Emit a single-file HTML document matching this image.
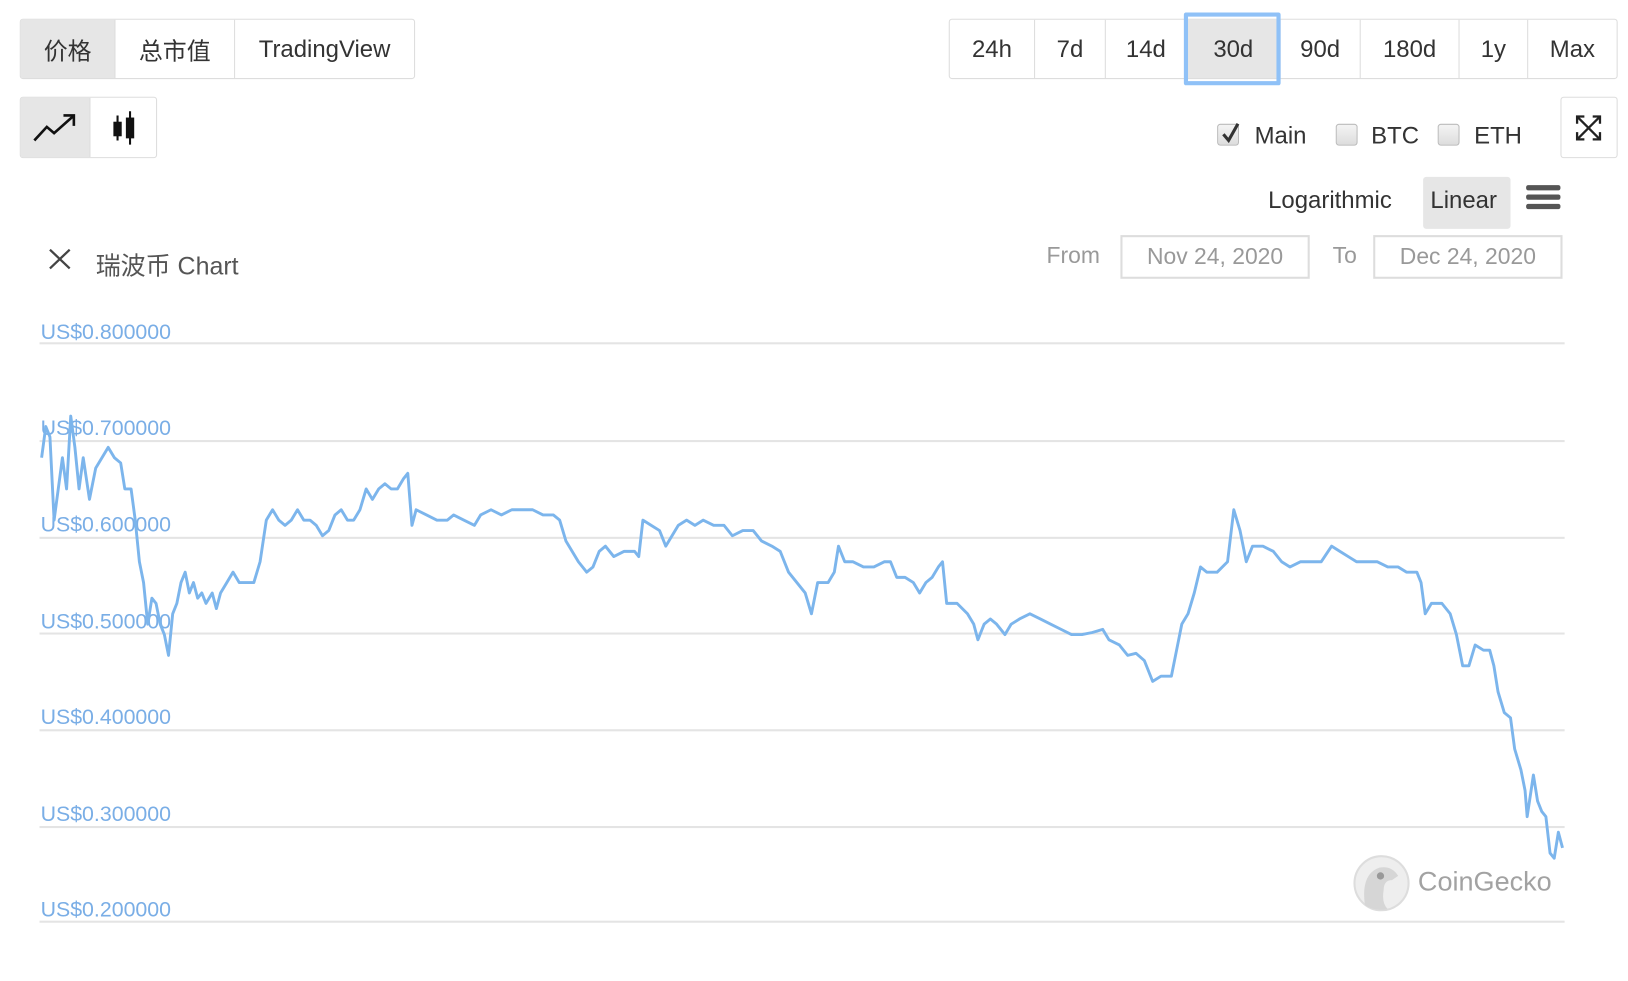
<!DOCTYPE html>
<html><head><meta charset="utf-8"><style>
html,body{margin:0;padding:0;background:#fff;width:1628px;height:981px;overflow:hidden}
#w{position:absolute;left:0;top:0;width:1565px;height:943px;transform:scale(1.0403);transform-origin:0 0;font-family:"Liberation Sans","Noto Sans CJK SC",sans-serif;color:#333}
.a{position:absolute;box-sizing:border-box}
.grp{border:1px solid #ddd;border-radius:3px;display:flex;overflow:hidden}
.grp div{border-right:1px solid #ddd;display:flex;align-items:center;justify-content:center;font-size:23px;color:#333;height:100%;box-sizing:border-box}
.grp div:last-child{border-right:none}
.on{background:#e6e6e6}
.gl{position:absolute;left:38px;width:1466px;height:2px;background:#e4e4e4}
.lb{position:absolute;left:39px;font-size:20.5px;color:#7aaee6}
.cb{position:absolute;width:21px;height:21px;border:1px solid #bbb;border-radius:3px;background:linear-gradient(#f4f4f4,#ddd);box-sizing:border-box}
.t{position:absolute;font-size:23px;color:#333;white-space:nowrap}
.dt{position:absolute;border:2px solid #ddd;font-size:22px;color:#999;display:flex;align-items:center;justify-content:center;box-sizing:border-box}
</style></head><body><div id="w">
<div class="a grp" style="left:19px;top:18px;width:380px;height:58px">
<div class="on" style="width:91px">价格</div><div style="width:115px">总市值</div><div style="flex:1">TradingView</div></div>
<div class="a grp" style="left:912px;top:18px;width:643px;height:58px">
<div style="width:82px">24h</div><div style="width:68px">7d</div><div style="width:78px">14d</div><div class="on" style="width:90px">30d</div><div style="width:77px">90d</div><div style="width:95px">180d</div><div style="width:66px">1y</div><div style="flex:1">Max</div></div>
<div class="a" style="left:1138px;top:12px;width:93px;height:70px;border:4px solid #8fc1f7;border-radius:2px"></div>
<div class="a grp" style="left:19px;top:93px;width:132px;height:59px">
<div class="on" style="width:67px"><svg width="44" height="30" viewBox="0 0 44 30"><path d="M2 27 L14 14 L21 20 L39 4" fill="none" stroke="#111" stroke-width="2.5"/><path d="M30 3 L40 3 L40 13" fill="none" stroke="#111" stroke-width="2.5"/></svg></div>
<div style="flex:1"><svg width="30" height="36" viewBox="0 0 30 36"><line x1="9" y1="6" x2="9" y2="30" stroke="#111" stroke-width="2"/><rect x="5" y="12" width="8" height="14" fill="#111"/><line x1="21" y1="2" x2="21" y2="34" stroke="#111" stroke-width="2"/><rect x="17" y="8" width="8" height="20" fill="#111"/></svg></div></div>
<div class="cb" style="left:1170px;top:119px"></div>
<svg class="a" style="left:1173px;top:117px" width="20" height="22"><path d="M3 12 L8 18 L17 2" fill="none" stroke="#333" stroke-width="3"/></svg>
<div class="t" style="left:1206px;top:117px">Main</div>
<div class="cb" style="left:1284px;top:119px"></div>
<div class="t" style="left:1318px;top:117px">BTC</div>
<div class="cb" style="left:1382px;top:119px"></div>
<div class="t" style="left:1417px;top:117px">ETH</div>
<div class="a" style="left:1500px;top:93px;width:55px;height:59px;border:1px solid #ddd;border-radius:3px"></div>
<svg class="a" style="left:1514px;top:110px" width="26" height="26" viewBox="0 0 26 26"><g fill="none" stroke="#222" stroke-width="2.2"><path d="M2 2 L24 24 M24 2 L2 24"/><path d="M2 9 V2 H9 M17 2 H24 V9 M2 17 V24 H9 M17 24 H24 V17"/></g></svg>
<div class="t" style="left:1219px;top:179px">Logarithmic</div>
<div class="a on" style="left:1368px;top:170px;width:84px;height:50px;border-radius:3px"></div>
<div class="t" style="left:1375px;top:179px">Linear</div>
<div class="a" style="left:1467px;top:178px;width:33px;height:5px;background:#555;border-radius:2px"></div>
<div class="a" style="left:1467px;top:187px;width:33px;height:5px;background:#555;border-radius:2px"></div>
<div class="a" style="left:1467px;top:196px;width:33px;height:5px;background:#555;border-radius:2px"></div>
<svg class="a" style="left:46px;top:238px" width="23" height="22"><path d="M2 2 L21 20 M21 2 L2 20" stroke="#444" stroke-width="2.2"/></svg>
<div class="t" style="left:92px;top:236px;color:#555;font-size:24px">瑞波币 Chart</div>
<div class="t" style="left:1006px;top:233px;color:#999;font-size:22px">From</div>
<div class="dt" style="left:1077px;top:226px;width:182px;height:42px">Nov 24, 2020</div>
<div class="t" style="left:1281px;top:233px;color:#999;font-size:22px">To</div>
<div class="dt" style="left:1320px;top:226px;width:182px;height:42px">Dec 24, 2020</div>
<div class="gl" style="top:329px"></div><div class="gl" style="top:423px"></div><div class="gl" style="top:516px"></div><div class="gl" style="top:608px"></div><div class="gl" style="top:701px"></div><div class="gl" style="top:794px"></div><div class="gl" style="top:885px"></div>
<div class="lb" style="top:308px">US$0.800000</div><div class="lb" style="top:400px">US$0.700000</div><div class="lb" style="top:493px">US$0.600000</div><div class="lb" style="top:586px">US$0.500000</div><div class="lb" style="top:678px">US$0.400000</div><div class="lb" style="top:771px">US$0.300000</div><div class="lb" style="top:863px">US$0.200000</div>
<svg class="a" style="left:1300px;top:820px" width="60" height="60" viewBox="0 0 60 60"><circle cx="28" cy="29" r="26" fill="#eee" stroke="#ddd" stroke-width="2"/><path d="M12 50 Q8 20 26 14 Q38 12 44 22 L38 26 Q30 26 30 36 Q28 48 34 54 Q20 56 12 50Z" fill="#d6d6d6"/><circle cx="27" cy="22" r="3.5" fill="#999"/></svg>
<div class="t" style="left:1363px;top:832px;font-size:26px;color:#a2a2a2;font-family:'Liberation Sans',sans-serif">CoinGecko</div>
<svg class="a" style="left:0;top:0" width="1565" height="943"><polyline fill="none" stroke="#7cb5ec" stroke-width="2.8" stroke-linejoin="round" points="40,440 44,410 48,420 52,500 56,470 60,440 64,470 68,400 72,430 76,470 80,440 86,480 92,450 98,440 104,430 110,440 116,445 120,470 126,470 130,500 134,540 138,560 142,600 146,575 150,580 154,600 158,610 162,630 166,590 170,580 174,560 178,550 182,570 186,560 190,575 194,570 198,580 204,570 208,585 212,570 218,560 224,550 230,560 236,560 244,560 250,540 256,500 262,490 268,500 274,505 280,500 286,490 292,500 298,500 304,505 310,515 316,510 322,495 328,490 334,500 340,500 346,490 352,470 358,480 364,470 370,465 376,470 382,470 388,460 392,455 396,505 400,490 410,495 420,500 430,500 436,495 446,500 456,505 462,495 472,490 482,495 492,490 502,490 512,490 522,495 532,495 538,500 544,520 550,530 556,540 564,550 570,545 576,530 582,525 590,535 600,530 610,530 614,535 618,500 626,505 634,510 640,525 646,515 652,505 660,500 668,505 676,500 686,505 696,505 704,515 714,510 724,510 732,520 742,525 750,530 758,550 766,560 774,570 780,590 786,560 796,560 802,550 806,525 812,540 820,540 830,545 840,545 850,540 856,540 862,555 870,555 878,560 884,570 890,560 896,555 902,545 906,540 910,580 920,580 930,590 936,600 940,615 946,600 952,595 958,600 966,610 972,600 980,595 990,590 1000,595 1010,600 1020,605 1030,610 1040,610 1050,608 1060,605 1066,615 1076,620 1084,630 1092,628 1100,635 1108,655 1116,650 1126,650 1130,630 1136,600 1142,590 1148,570 1154,545 1160,550 1170,550 1180,540 1186,490 1192,510 1198,540 1204,525 1214,525 1224,530 1232,540 1240,545 1250,540 1260,540 1270,540 1280,525 1288,530 1296,535 1304,540 1314,540 1324,540 1334,545 1344,545 1352,550 1362,550 1366,560 1370,590 1376,580 1386,580 1394,590 1400,610 1406,640 1412,640 1418,620 1426,625 1432,625 1436,640 1440,665 1446,685 1452,690 1456,720 1462,740 1466,760 1468,785 1474,745 1478,770 1482,780 1486,785 1490,820 1494,825 1498,800 1502,815"/></svg>
</div></body></html>
